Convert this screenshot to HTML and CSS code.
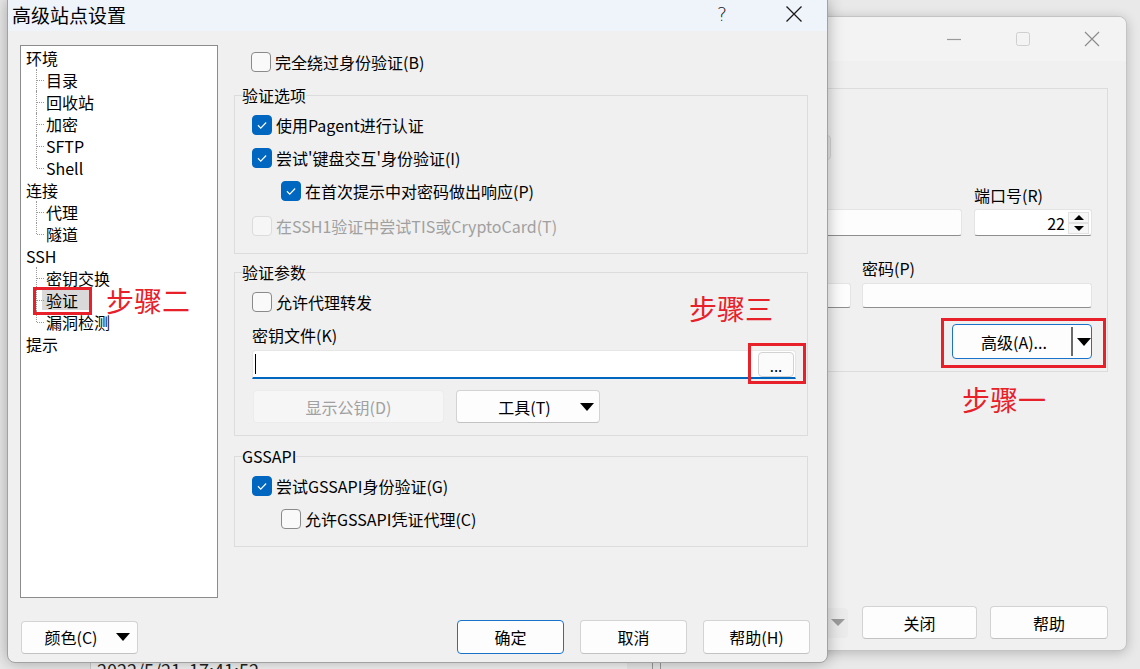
FILE: index.html
```html
<!DOCTYPE html>
<html lang="zh-CN">
<head>
<meta charset="utf-8">
<title>高级站点设置</title>
<link rel="stylesheet" href="styles.css">
</head>
<body>
<div class="desk">
  <div class="under"><span class="under-text">2022/5/21&nbsp;&nbsp;17:41:52</span></div>
  <div class="under2"></div>

  <!-- background login window -->
  <div class="login">
    <div class="lw-title">
      <span class="lw-ctl"><svg width="16" height="16" viewBox="0 0 16 16"><path d="M1 8.5H15" stroke="#9a9a9a" stroke-width="1.2"/></svg></span>
      <span class="lw-ctl"><svg width="16" height="16" viewBox="0 0 16 16"><rect x="1.5" y="1.5" width="13" height="13" rx="2" fill="none" stroke="#cfcfcf" stroke-width="1"/></svg></span>
      <span class="lw-ctl"><svg width="18" height="18" viewBox="0 0 18 18"><path d="M2 2L16 16M16 2L2 16" stroke="#8c8c8c" stroke-width="1.2"/></svg></span>
    </div>
    <div class="lw-body">
      <div class="lw-group">
        <div class="lw-ghost-row"><span class="ghost-btn"></span></div>
        <div class="lw-row r1 lbl"><span></span><span>端口号(R)</span></div>
        <div class="lw-row r1 inp">
          <span class="fld"></span>
          <span class="fld port"><span class="port-val">22</span><span class="spin"><span class="spin-b"><i class="tri-up"></i></span><span class="spin-b"><i class="tri-dn"></i></span></span></span>
        </div>
        <div class="lw-row r2 lbl"><span></span><span>密码(P)</span></div>
        <div class="lw-row r2 inp2"><span class="fld"></span><span class="fld"></span></div>
        <div class="lw-adv-row">
          <span class="btn primary split"><span class="split-txt">高级(A)...</span><span class="split-sep"></span><i class="tri-dn big"></i></span>
        </div>
      </div>
    </div>
    <div class="lw-foot">
      <span class="dd-stub"><i class="tri-dn gray"></i></span>
      <span class="btn lw-btn">关闭</span>
      <span class="btn lw-btn wide">帮助</span>
    </div>
  </div>

  <!-- main dialog -->
  <div class="dlg">
    <div class="dlg-title">
      <span class="t">高级站点设置</span>
      <span class="cap help">?</span>
      <span class="cap"><svg width="18" height="18" viewBox="0 0 18 18"><path d="M1.5 1.5L16.5 16.5M16.5 1.5L1.5 16.5" stroke="#1a1a1a" stroke-width="1.3"/></svg></span>
    </div>
    <div class="dlg-body">
      <div class="dlg-main">
        <div class="tree">
          <div class="node">环境</div>
          <ul class="kids">
            <li>目录</li>
            <li>回收站</li>
            <li>加密</li>
            <li>SFTP</li>
            <li>Shell</li>
          </ul>
          <div class="node">连接</div>
          <ul class="kids">
            <li>代理</li>
            <li>隧道</li>
          </ul>
          <div class="node">SSH</div>
          <ul class="kids">
            <li>密钥交换</li>
            <li><span class="sel">验证</span></li>
            <li>漏洞检测</li>
          </ul>
          <div class="node">提示</div>
        </div>

        <div class="panel">
          <label class="opt top"><span class="cb"></span>完全绕过身份验证(B)</label>

          <fieldset class="grp g1">
            <legend>验证选项</legend>
            <div class="grp-in">
              <label class="opt"><span class="cb on"><svg viewBox="0 0 20 20"><path d="M5.5 10.3L8.6 13.4L14.6 7.2"/></svg></span>使用Pagent进行认证</label>
              <label class="opt"><span class="cb on"><svg viewBox="0 0 20 20"><path d="M5.5 10.3L8.6 13.4L14.6 7.2"/></svg></span>尝试'键盘交互'身份验证(I)</label>
              <label class="opt sub"><span class="cb on"><svg viewBox="0 0 20 20"><path d="M5.5 10.3L8.6 13.4L14.6 7.2"/></svg></span>在首次提示中对密码做出响应(P)</label>
              <label class="opt dis last"><span class="cb off-dis"></span>在SSH1验证中尝试TIS或CryptoCard(T)</label>
            </div>
          </fieldset>

          <fieldset class="grp g2">
            <legend>验证参数</legend>
            <div class="grp-in">
              <label class="opt"><span class="cb"></span>允许代理转发</label>
              <div class="klabel">密钥文件(K)</div>
              <div class="keyfld">
                <span class="caret"></span>
                <span class="browse">...</span>
              </div>
              <div class="btnrow">
                <span class="btn disabled showkey">显示公钥(D)</span>
                <span class="btn tools"><span class="tools-txt">工具(T)</span><i class="tri-dn big"></i></span>
              </div>
            </div>
          </fieldset>

          <fieldset class="grp g3">
            <legend>GSSAPI</legend>
            <div class="grp-in">
              <label class="opt"><span class="cb on"><svg viewBox="0 0 20 20"><path d="M5.5 10.3L8.6 13.4L14.6 7.2"/></svg></span>尝试GSSAPI身份验证(G)</label>
              <label class="opt sub"><span class="cb"></span>允许GSSAPI凭证代理(C)</label>
            </div>
          </fieldset>
        </div>
      </div>

      <div class="dlg-foot">
        <span class="btn color"><span class="color-txt">颜色(C)</span><i class="tri-dn big"></i></span>
        <span class="foot-right">
          <span class="btn primary fbtn">确定</span>
          <span class="btn fbtn">取消</span>
          <span class="btn fbtn">帮助(H)</span>
        </span>
      </div>
    </div>
  </div>

  <!-- red annotations -->
  <div class="mark m2"></div>
  <div class="mark m3"></div>
  <div class="mark m1"></div>
  <div class="note n2">步骤二</div>
  <div class="note n3">步骤三</div>
  <div class="note n1">步骤一</div>
</div>
</body>
</html>
```

FILE: styles.css
```css
* { box-sizing: border-box; }
html, body { margin: 0; padding: 0; }
body {
  width: 1140px;
  height: 669px;
  overflow: hidden;
  background: #e9e9e9;
  font-family: "Noto Sans CJK SC", "Noto Sans", sans-serif;
  font-size: 16px;
  color: #000;
}
.desk {
  position: relative;
  width: 1140px;
  height: 669px;
  overflow: hidden;
  background: #e9e9e9;
}

/* things lying under the windows */
.under {
  position: absolute;
  left: 90px;
  top: 648px;
  width: 537px;
  height: 30px;
  background: #f4f4f4;
  border-left: 1px solid #cfcfcf;
}
.under-text {
  display: block;
  padding: 11px 0 0 6px;
  font-size: 18px;
  line-height: 22px;
  color: #222;
}
.under2 {
  position: absolute;
  left: 652px;
  top: 648px;
  width: 9px;
  height: 30px;
  border-left: 1px solid #9a9a9a;
  border-right: 1px solid #9a9a9a;
}

/* ---------- background window ---------- */
.login {
  position: absolute;
  left: 780px;
  top: 16px;
  width: 347px;
  height: 635px;
  background: #f0f0f0;
  border: 1px solid #c4c4c4;
  border-radius: 8px;
  box-shadow: 0 2px 12px rgba(0, 0, 0, 0.22);
  display: flex;
  flex-direction: column;
}
.lw-title {
  flex: none;
  height: 44px;
  display: flex;
  justify-content: flex-end;
  background: #f3f3f3;
  border-radius: 8px 8px 0 0;
}
.lw-ctl {
  width: 69px;
  height: 44px;
  display: flex;
  align-items: center;
  justify-content: center;
}
.lw-body {
  padding: 27px 18px 0 10px;
}
.lw-group {
  border: 1px solid #dcdcdc;
  padding: 0 15px 12px 0;
}
.lw-ghost-row {
  margin-top: 46px;
  height: 25px;
}
.ghost-btn {
  display: block;
  width: 39px;
  height: 25px;
  background: #e8e8e8;
  border: 1px solid #d6d6d6;
  border-radius: 4px;
}
.lw-row {
  display: grid;
}
.lw-row.r1 { grid-template-columns: 170px 118px; column-gap: 12px; }
.lw-row.r2 { grid-template-columns: 59px 230px; column-gap: 11px; }
.lw-row.lbl { height: 20px; line-height: 20px; font-size: 16px; white-space: nowrap; }
.lw-row.r1.lbl { margin-top: 25px; }
.lw-row.inp { margin-top: 4px; height: 27px; }
.lw-row.r2.lbl { margin-top: 22px; }
.lw-row.inp2 { margin-top: 5px; height: 25px; }
.fld {
  display: block;
  background: #fdfdfd;
  border: 1px solid #e4e4e4;
  border-bottom: 1px solid #8e8e8e;
  border-radius: 3px;
}
.fld.port {
  display: flex;
  align-items: center;
  justify-content: flex-end;
  padding-right: 2px;
  background: #fff;
}
.port-val { font-size: 16px; line-height: 20px; margin-right: 3px; }
.spin {
  display: flex;
  flex-direction: column;
  width: 21px;
  height: 22px;
}
.spin-b {
  flex: 1;
  display: flex;
  align-items: center;
  justify-content: center;
  border: 1px solid #e2e2e2;
  background: #f7f7f7;
}
.tri-up {
  display: block;
  width: 0; height: 0;
  border-left: 5px solid transparent;
  border-right: 5px solid transparent;
  border-bottom: 5px solid #000;
}
.tri-dn {
  display: block;
  width: 0; height: 0;
  border-left: 5px solid transparent;
  border-right: 5px solid transparent;
  border-top: 5px solid #000;
}
.tri-dn.big {
  border-left-width: 7px;
  border-right-width: 7px;
  border-top-width: 8px;
}
.tri-dn.gray {
  border-left-width: 7px;
  border-right-width: 7px;
  border-top-width: 7px;
  border-top-color: #9c9c9c;
}
.lw-adv-row {
  margin-top: 16px;
  display: flex;
  justify-content: flex-end;
}

.btn {
  display: flex;
  align-items: center;
  justify-content: center;
  height: 34px;
  background: #fdfdfd;
  border: 1px solid #d3d3d3;
  border-bottom-color: #c2c2c2;
  border-radius: 4px;
  font-size: 16px;
  line-height: 20px;
  white-space: nowrap;
}
.btn.primary { border-color: #1a73c8; }
.btn.disabled { background: #f6f6f6; border-color: #ececec; color: #a0a0a0; }

.split {
  width: 140px;
  height: 35px;
  justify-content: flex-start;
}
.split-txt { width: 118px; text-align: center; padding-left: 4px; }
.split-sep {
  width: 2px;
  height: 29px;
  background: #6a6a6a;
  margin-right: 4px;
}

.lw-foot {
  margin-top: auto;
  display: flex;
  justify-content: flex-end;
  align-items: center;
  padding: 0 18px 11px 0;
}
.dd-stub {
  width: 40px;
  height: 30px;
  display: flex;
  align-items: center;
  justify-content: flex-end;
  padding-right: 3px;
  background: #ebebeb;
  border-radius: 4px;
  margin-right: 14px;
}
.lw-btn { width: 115px; height: 33px; margin-right: 13px; }
.lw-btn.wide { width: 118px; margin-right: 0; }

/* ---------- main dialog ---------- */
.dlg {
  position: absolute;
  left: 7px;
  top: -1px;
  width: 821px;
  height: 664px;
  background: #f0f0f0;
  border: 1px solid #a2a2a2;
  border-radius: 0 0 8px 8px;
  box-shadow: 0 0 16px rgba(0, 0, 0, 0.3);
  display: flex;
  flex-direction: column;
}
.dlg-title {
  flex: none;
  height: 31px;
  display: flex;
  align-items: center;
  background: #eff3fa;
}
.dlg-title .t {
  flex: 1;
  padding: 0 0 2px 4px;
  font-size: 19px;
  line-height: 29px;
}
.cap {
  width: 66px;
  height: 31px;
  display: flex;
  align-items: center;
  justify-content: center;
  padding-bottom: 3px;
}
.cap.help {
  margin-right: 6px;
  font-size: 19px;
  color: #1a1a1a;
  font-family: "DejaVu Sans", sans-serif;
  font-weight: 300;
}
.dlg-body {
  flex: 1;
  display: flex;
  flex-direction: column;
  padding: 14px 19px 8px 12px;
}
.dlg-main {
  display: grid;
  grid-template-columns: 198px 1fr;
  column-gap: 16px;
}

/* tree */
.tree {
  height: 553px;
  background: #fff;
  border: 1px solid #8c8c8c;
  padding: 1px 0 0 5px;
  font-size: 16px;
}
.node { height: 22px; line-height: 22px; }
.kids { list-style: none; margin: 0; padding: 0; }
.kids li {
  position: relative;
  height: 22px;
  line-height: 22px;
  padding-left: 20px;
  white-space: nowrap;
}
.kids li::before {
  content: "";
  position: absolute;
  left: 10px;
  top: 0;
  bottom: 0;
  border-left: 1px dotted #9a9a9a;
}
.kids li:last-child::before { bottom: 11px; }
.kids li::after {
  content: "";
  position: absolute;
  left: 11px;
  top: 11px;
  width: 7px;
  border-top: 1px dotted #9a9a9a;
}
.sel {
  display: inline-block;
  background: #d9d9d9;
  margin-left: -4px;
  padding: 0 11px 0 4px;
  line-height: 20px;
}

/* right panel */
.panel { padding-top: 7px; }
.opt {
  display: flex;
  align-items: center;
  gap: 4px;
  height: 20px;
  line-height: 20px;
  white-space: nowrap;
}
.opt.top { margin-left: 17px; }
.opt.sub { margin-left: 29px; }
.opt.dis { color: #a0a0a0; }
.cb {
  flex: none;
  width: 20px;
  height: 20px;
  border: 1px solid #8a8a8a;
  border-radius: 4px;
  background: #f9f9f9;
}
.cb.on { background: #0067c0; border-color: #0067c0; }
.cb.on svg { display: block; width: 18px; height: 18px; }
.cb.on svg path { fill: none; stroke: #fff; stroke-width: 1.3; }
.cb.off-dis { border-color: #dcdcdc; background: #f6f6f6; }

.grp {
  margin: 0;
  padding: 0;
  border: 1px solid #dcdcdc;
  min-width: 0;
}
.grp legend {
  margin-left: 7px;
  padding: 0;
  font-size: 16px;
  line-height: 20px;
}
.grp-in { padding: 0 11px 17px 17px; }
.g1 { margin-top: 13px; }
.g1 .grp-in { padding-top: 10px; }
.g1 .opt + .opt { margin-top: 13px; }
.g1 .opt.last { margin-top: 15px; }
.g2 { margin-top: 8px; }
.g2 .grp-in { padding-top: 10px; padding-bottom: 12px; }
.klabel { margin-top: 13px; height: 20px; line-height: 20px; }
.keyfld {
  margin-top: 5px;
  height: 29px;
  background: #fff;
  border: 1px solid #e6e6e6;
  border-bottom: 2px solid #0067c0;
  border-radius: 4px 4px 0 0;
  display: flex;
  align-items: center;
  justify-content: space-between;
  padding: 0 1px 0 2px;
}
.caret {
  display: block;
  width: 1px;
  height: 20px;
  background: #000;
}
.browse {
  width: 36px;
  height: 25px;
  background: #fbfbfb;
  border: 1px solid #d2d2d2;
  border-radius: 4px;
  text-align: center;
  font-size: 15px;
  line-height: 26px;
}
.btnrow {
  margin-top: 11px;
  display: flex;
  gap: 12px;
  padding-left: 1px;
}
.showkey { width: 191px; height: 33px; }
.tools { width: 144px; height: 33px; justify-content: flex-start; padding-right: 5px; }
.tools-txt { flex: 1; text-align: center; padding-left: 12px; }
.g3 { margin-top: 10px; }
.g3 .grp-in { padding-top: 10px; }
.g3 .opt + .opt { margin-top: 13px; }

/* footer */
.dlg-foot {
  margin-top: 22px;
  height: 34px;
  display: flex;
  align-items: center;
  justify-content: space-between;
}
.color {
  margin-left: 1px;
  width: 117px;
  height: 33px;
  justify-content: flex-start;
  padding-right: 7px;
}
.color-txt { flex: 1; text-align: center; padding-left: 4px; }
.foot-right {
  display: flex;
  gap: 16px;
  margin-right: -2px;
}
.fbtn { width: 107px; height: 34px; }

/* annotations */
.mark {
  position: absolute;
  border: 3px solid #e8202a;
}
.m2 { left: 33px; top: 287px; width: 59px; height: 28px; }
.m3 { left: 748px; top: 343px; width: 58px; height: 41px; }
.m1 { left: 941px; top: 318px; width: 165px; height: 50px; }
.note {
  position: absolute;
  color: #e8202a;
  font-size: 28px;
  line-height: 30px;
  white-space: nowrap;
}
.n2 { left: 106px; top: 285px; }
.n3 { left: 689px; top: 293px; }
.n1 { left: 962px; top: 384px; }
```
